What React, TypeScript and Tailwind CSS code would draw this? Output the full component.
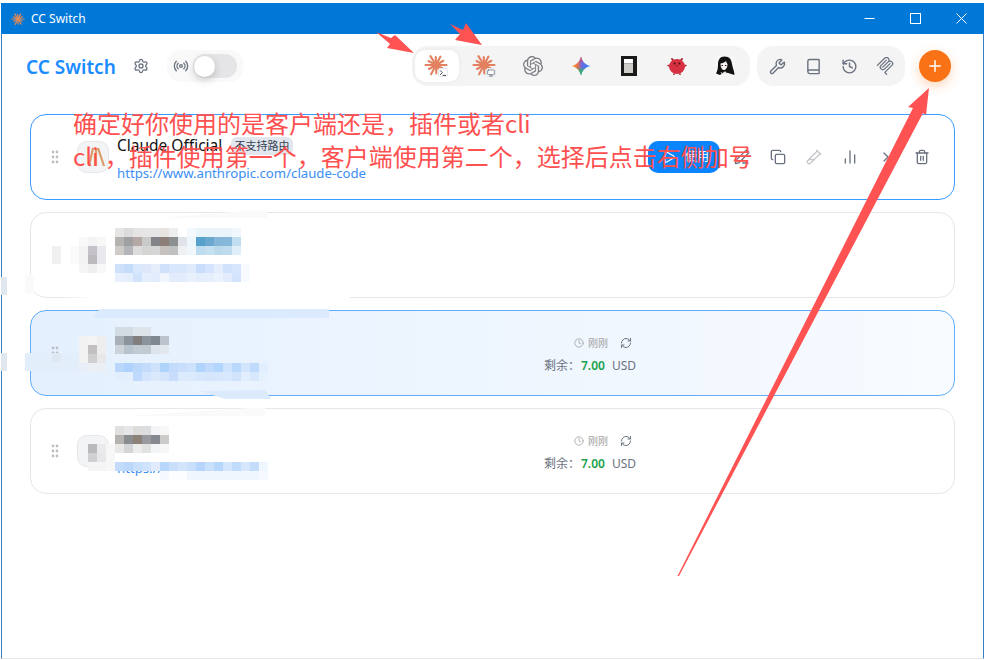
import { Settings, Radio, Wrench, Book, History, Plus, Play, Edit3, Copy, TestTube2, BarChart2, ChevronRight, Trash2, Clock, RefreshCw, Terminal, Monitor } from "lucide-react";
import { SiOpenai } from "react-icons/si";

const rays: [number, number][] = [[0, 10.5], [28, 8], [58, 10.5], [88, 8.5], [118, 10.5], [150, 8], [180, 10.5], [208, 8.5], [238, 10.5], [268, 8], [298, 9.5], [330, 8.5]];

function Star({ size = 24, color = "#e2805f" }: { size?: number; color?: string }) {
  return (
    <svg width={size} height={size} viewBox="-12 -12 24 24">
      {rays.map(([a, r], i) => {
        const t = (a * Math.PI) / 180;
        return <line key={i} x1={0} y1={0} x2={Math.cos(t) * r} y2={Math.sin(t) * r} stroke={color} strokeWidth={2.1} strokeLinecap="round" />;
      })}
      <circle r={3.6} fill={color} />
    </svg>
  );
}

function ClaudeTab({ active, badge }: { active?: boolean; badge: "terminal" | "monitor" }) {
  return (
    <button className={`relative w-[44px] h-[32px] flex items-center justify-center rounded-[10px] ${active ? "bg-white shadow-[0_0_4px_rgba(0,0,0,0.06)]" : ""}`}>
      <span className="mt-[-2px] ml-[-2px]"><Star /></span>
      <span className="absolute left-[23px] top-[18px] w-[10px] h-[9px] rounded-[2px] bg-white border border-[#e5e7eb] flex items-center justify-center">
        {badge === "terminal" ? <Terminal size={8} color="#111827" strokeWidth={2.4} /> : <Monitor size={8} color="#6b7280" strokeWidth={2.4} />}
      </span>
    </button>
  );
}

function Gemini() {
  const star = "M10 0.5C11.2 5.6 14.4 8.8 19.5 10C14.4 11.2 11.2 14.4 10 19.5C8.8 14.4 5.6 11.2 0.5 10C5.6 8.8 8.8 5.6 10 0.5Z";
  return (
    <svg width="20" height="20" viewBox="0 0 20 20">
      <defs>
        <linearGradient id="gemA" x1="0" y1="0" x2="1" y2="0">
          <stop offset="0" stopColor="#f0b030" />
          <stop offset="0.32" stopColor="#e8704a" />
          <stop offset="0.55" stopColor="#6a68e6" />
          <stop offset="1" stopColor="#2f8cf5" />
        </linearGradient>
        <linearGradient id="gemB" x1="0" y1="0" x2="0" y2="1">
          <stop offset="0.55" stopColor="#2fb56b" stopOpacity="0" />
          <stop offset="0.8" stopColor="#2fb56b" />
          <stop offset="1" stopColor="#1fae9a" />
        </linearGradient>
        <linearGradient id="gemC" x1="0" y1="0" x2="0" y2="1">
          <stop offset="0" stopColor="#e8404a" />
          <stop offset="0.35" stopColor="#e8404a" stopOpacity="0" />
        </linearGradient>
      </defs>
      <path d={star} fill="url(#gemA)" />
      <path d={star} fill="url(#gemB)" />
      <path d={star} fill="url(#gemC)" />
    </svg>
  );
}

function OpenCode() {
  return (
    <svg width="16" height="20" viewBox="0 0 16 20">
      <rect width="16" height="20" fill="#1c1a19" />
      <rect x="3" y="3" width="9" height="4.5" fill="#fff" />
      <rect x="3" y="7.5" width="9" height="9.5" fill="#cfcdca" />
    </svg>
  );
}

function RedBird() {
  return (
    <svg width="20" height="20" viewBox="0 0 20 20">
      <path d="M5 3 7 5.5M15 3 13 5.5" stroke="#a81c2a" strokeWidth="2" strokeLinecap="round" />
      <path d="M1 9.5 3 10M19 9.5 17 10" stroke="#c02432" strokeWidth="1.5" strokeLinecap="round" />
      <ellipse cx="10" cy="10.5" rx="8" ry="7.4" fill="#d63041" />
      <circle cx="7.6" cy="7.6" r="1" fill="#4a1014" />
      <circle cx="12.4" cy="7.6" r="1" fill="#4a1014" />
      <path d="M8.5 9.5h3l-1.5 1.4z" fill="#9a1a24" />
      <path d="M7 17.5v1.5M13 17.5v1.5" stroke="#9a1a24" strokeWidth="1.4" />
    </svg>
  );
}

function Girl() {
  return (
    <svg width="20" height="20" viewBox="0 0 20 20">
      <rect width="20" height="20" fill="#f7f7f7" />
      <path d="M9.5 0.5C5 0.5 3 4 3 8.5C3 12 2.5 15 1 17.5L5 19L9 16L13 17L19.5 19C19.5 15 17.5 12 17 8C16.5 3.5 14.5 0.5 9.5 0.5Z" fill="#111" />
      <path d="M5.5 7.5C7.5 7.5 9.5 6.5 11 5C11.5 6.5 12 7.5 12.5 8C12.5 11.5 11 14 9 14C7 14 5.5 11.5 5.5 7.5Z" fill="#f5f0ee" />
      <rect x="6.5" y="9" width="1.4" height="1" fill="#111" />
      <rect x="10" y="9" width="1.4" height="1" fill="#111" />
      <path d="M6 16 8 19 10 15.5 12 19 14 17" stroke="#e8e8e8" strokeWidth="0.8" fill="none" />
    </svg>
  );
}

function Mcp() {
  return (
    <svg width="18" height="18" viewBox="0 0 24 24" fill="#6b7280">
      <path d="M15.688 2.343a2.588 2.588 0 00-3.61 0l-9.626 9.44a.863.863 0 01-1.203 0 .823.823 0 010-1.18l9.626-9.44a4.313 4.313 0 016.016 0 4.116 4.116 0 011.204 3.54 4.3 4.3 0 013.609 1.18l.05.05a4.115 4.115 0 010 5.9l-8.706 8.537a.274.274 0 000 .393l1.788 1.754a.823.823 0 010 1.18.863.863 0 01-1.203 0l-1.788-1.753a1.92 1.92 0 010-2.754l8.706-8.538a2.47 2.47 0 000-3.54l-.05-.049a2.588 2.588 0 00-3.607-.003l-7.172 7.034-.002.002-.098.097a.863.863 0 01-1.204 0 .823.823 0 010-1.18l7.273-7.133a2.47 2.47 0 00-.003-3.537z" />
      <path d="M14.485 4.703a.823.823 0 000-1.18.863.863 0 00-1.204 0l-7.119 6.982a4.115 4.115 0 000 5.9 4.314 4.314 0 006.016 0l7.12-6.982a.823.823 0 000-1.18.863.863 0 00-1.204 0l-7.119 6.982a2.588 2.588 0 01-3.61 0 2.47 2.47 0 010-3.54l7.12-6.982z" />
    </svg>
  );
}

function Handle({ hidden }: { hidden?: boolean }) {
  return (
    <svg width="16" height="16" viewBox="0 0 16 16" fill="#bcbec2" className={`shrink-0 ${hidden ? "invisible" : ""}`}>
      {[3, 8, 13].map((y) => [6, 10].map((x) => <circle key={`${x}-${y}`} cx={x} cy={y} r="1.4" />))}
    </svg>
  );
}

function Mosaic({ x, y, w, rows, cell = 9 }: { x: number; y: number; w?: number; rows: string[][]; cell?: number }) {
  return (
    <div className="absolute" style={{ left: x, top: y, width: w }}>
      {rows.map((r, i) => (
        <div key={i} className="flex">
          {r.map((c, j) => (
            <div key={j} className="shrink-0" style={{ width: cell, height: cell, background: c === "-" ? "transparent" : `#${c}` }} />
          ))}
        </div>
      ))}
    </div>
  );
}

function Usage() {
  return (
    <div className="flex flex-col items-end gap-[7px] text-[12px] leading-[16px] text-[#6b7280]">
      <div className="flex items-center mr-[4px]">
        <Clock size={10} color="#a3a3a3" />
        <span className="ml-[4px] text-[10px] text-[#a3a3a3]">刚刚</span>
        <RefreshCw size={12} color="#6b7280" className="ml-[12px]" />
      </div>
      <div className="flex items-center">
        <span>剩余：</span>
        <span className="font-semibold text-[#16a34a] text-[12px] ml-[1px]">7.00</span>
        <span className="ml-[7px]">USD</span>
      </div>
    </div>
  );
}

function Card({ className, children, iconClass, noHandle, icon }: { className: string; children?: React.ReactNode; iconClass?: string; noHandle?: boolean; icon?: React.ReactNode }) {
  return (
    <div className={`h-[86px] rounded-[16px] border flex items-center pl-[16px] pr-[14px] ${className}`}>
      <Handle hidden={noHandle} />
      <div className={`ml-[14px] w-[32px] h-[32px] rounded-[10px] shrink-0 flex items-center justify-center ${iconClass ?? ""}`}>{icon}</div>
      {children}
    </div>
  );
}

export default function App() {
  const ic = "w-[36px] h-[36px] flex items-center justify-center";
  return (
    <div className="relative w-[988px] h-[660px] bg-white overflow-hidden pl-[1px] pt-[3px]" style={{ fontFamily: '"Noto Sans", "Noto Sans CJK SC", sans-serif' }}>
      <div className="w-[983px] h-[656px] flex flex-col border-l border-r border-b border-l-[#3a7fc4] border-r-[#3a7fc4] border-b-[#e5e7ef] bg-white">
        <div className="h-[31px] -mx-px bg-[#0078d7] flex items-center text-white shrink-0">
          <span className="ml-[10px]"><Star size={14} color="#e08a5a" /></span>
          <span className="ml-[6px] text-[12px]">CC Switch</span>
          <div className="ml-auto flex">
            <div className="w-[46px] h-[31px] flex items-center justify-center">
              <svg width="11" height="11" viewBox="0 0 11 11" stroke="#fff" strokeWidth="1"><line x1="0.5" y1="5.5" x2="10.5" y2="5.5" /></svg>
            </div>
            <div className="w-[46px] h-[31px] flex items-center justify-center">
              <svg width="11" height="11" viewBox="0 0 11 11" stroke="#fff" strokeWidth="1" fill="none"><rect x="0.5" y="0.5" width="10" height="10" /></svg>
            </div>
            <div className="w-[46px] h-[31px] flex items-center justify-center">
              <svg width="11" height="11" viewBox="0 0 11 11" stroke="#fff" strokeWidth="1"><path d="M0.5 0.5 10.5 10.5M10.5 0.5 0.5 10.5" /></svg>
            </div>
          </div>
        </div>

        <div className="h-[64px] flex items-center pl-[24px] pr-[32px] shrink-0">
          <span className="text-[19px] mt-[2px] font-semibold text-[#1a8cff] w-[92px] whitespace-nowrap">CC Switch</span>
          <Settings size={16} color="#6b7280" className="ml-[15px]" />
          <div className="ml-[18px] w-[76px] h-[32px] rounded-[14px] bg-[#f9f9f9] flex items-center pl-[6px]">
            <Radio size={16} color="#6b7280" />
            <div className="relative ml-[4px] w-[44px] h-[24px] rounded-full bg-[#e5e5e7]">
              <div className="absolute left-[1px] top-[1.5px] w-[21px] h-[21px] rounded-full bg-white shadow-[0_3px_8px_rgba(0,0,0,0.2)]" />
            </div>
          </div>
          <div className="ml-auto h-[40px] w-[338px] rounded-[16px] bg-[#f4f4f5] flex items-center px-[3px] gap-[4px]">
            <ClaudeTab active badge="terminal" />
            <ClaudeTab badge="monitor" />
            <div className="w-[44px] h-[32px] flex items-center justify-center"><SiOpenai size={20} color="#7b7c82" /></div>
            <div className="w-[44px] h-[32px] flex items-center justify-center"><Gemini /></div>
            <div className="w-[44px] h-[32px] flex items-center justify-center"><OpenCode /></div>
            <div className="w-[44px] h-[32px] flex items-center justify-center"><RedBird /></div>
            <div className="w-[44px] h-[32px] flex items-center justify-center"><Girl /></div>
          </div>
          <div className="ml-[7px] h-[40px] w-[148px] rounded-[16px] bg-[#f4f4f5] flex items-center px-[2px]">
            <div className={ic}><Wrench size={17} color="#6b7280" /></div>
            <div className={ic}><Book size={17} color="#6b7280" /></div>
            <div className={ic}><History size={17} color="#6b7280" /></div>
            <div className={ic}><Mcp /></div>
          </div>
          <div className="ml-[14px] w-[32px] h-[32px] rounded-full bg-[#f97316] flex items-center justify-center shadow-[0_4px_12px_rgba(249,115,22,0.3)]">
            <Plus size={18} color="#fff" />
          </div>
        </div>

        <div className="px-[28px] pt-[16px] flex flex-col gap-[12px]">
          <Card
            className="border-[#3b9bff] bg-white"
            iconClass="bg-[#f3f4f6] border border-[#e5e7eb]"
            icon={
              <svg width="22" height="22" viewBox="0 0 22 22" stroke="#d99a6c" strokeWidth="2.2" className="ml-[6px]">
                <path d="M8 2 4 20M11 2V20M13 2 19 20" />
              </svg>
            }
          >
            <div className="ml-[8px] flex flex-col gap-[7px] mt-[4px]">
              <div className="flex items-center gap-[8px] h-[20px]">
                <span className="text-[15.5px] w-[106px] text-[#111] whitespace-nowrap">Claude Official</span>
                <span className="h-[18px] w-[62px] rounded-[6px] bg-[#e2e7ef] text-[11px] leading-[18px] text-center text-[#374151] whitespace-nowrap">不支持路由</span>
              </div>
              <span className="text-[13.2px] leading-[20px] text-[#3b8ef5] whitespace-nowrap">https://www.anthropic.com/claude-code</span>
            </div>
            <div className="ml-auto flex items-center">
              <div className="w-[72px] h-[32px] rounded-[10px] bg-[#0a84ff] flex items-center justify-center gap-[9px] pl-[3px] text-white text-[12px]">
                <Play size={14} color="#fff" />
                <span>使用</span>
              </div>
              <div className={`${ic} ml-[4px]`}><Edit3 size={16} color="#6b7280" /></div>
              <div className={ic}><Copy size={16} color="#6b7280" /></div>
              <div className={ic}><TestTube2 size={16} color="#c4c6ca" /></div>
              <div className={ic}><BarChart2 size={16} color="#6b7280" /></div>
              <div className={ic}><ChevronRight size={16} color="#6b7280" /></div>
              <div className={ic}><Trash2 size={16} color="#6b7280" /></div>
            </div>
          </Card>
          <Card className="border-[#e5e7eb] bg-white" noHandle />
          <Card className="border-[#60aefb] bg-gradient-to-r from-[#e4f0fe] to-[#f8fbff]">
            <div className="ml-auto mr-[304px] mt-[3px]"><Usage /></div>
          </Card>
          <Card className="border-[#e5e7eb] bg-white" iconClass="bg-[#f3f4f6] border border-[#e5e7eb]">
            <div className="absolute left-[117px] top-[458px] text-[13.2px] leading-[20px] text-[#3b8ef5]">https://</div>
            <div className="ml-auto mr-[304px] mt-[3px]"><Usage /></div>
          </Card>
        </div>
      </div>

      {/* pixelated redaction patches */}
      <svg className="absolute left-0 top-0 pointer-events-none" width="988" height="660">
        <polygon points="157,218 258,210 267,212 267,218" fill="#fafafa" />
        <polygon points="60,298 330,290 350,292 350,299 60,299" fill="#ffffff" />
        <polygon points="92,318 100,309 329,309 329,318" fill="#dbeafc" />
        <polygon points="200,391 265,390 271,399 225,399" fill="#dbeafc" />
        <polygon points="130,416 250,408 265,408 265,416" fill="#fafafa" />
      </svg>
      <Mosaic x={1} y={277} rows={[["dfe6ee"], ["dfe6ee"], ["dfe6ee"]]} cell={6} w={6} />
      <Mosaic x={1} y={353} rows={[["dfe6ee"], ["dfe6ee"], ["dfe6ee"]]} cell={6} w={6} />
      <Mosaic x={25} y={275} rows={[["fafafa"], ["fafafa"]]} cell={9} />
      <Mosaic x={52} y={246} rows={[["f0f0f0"], ["f0f0f0"]]} />
      <Mosaic x={70} y={246} rows={[["fafafa"], ["fafafa"]]} />
      <Mosaic x={25} y={353} rows={[["e3eefb", "e3eefb", "e3eefb", "dde8f3", "e3eefb", "e3eefb"], ["e3eefb", "e3eefb", "e3eefb", "e3eefb", "e3eefb", "e3eefb"]]} />
      <Mosaic x={79} y={237} rows={[["f8f8f8", "f3f3f3", "f8f8f8"], ["f3f3f3", "c4c2c8", "e8e8ed"], ["f3f3f3", "bcb9bc", "e8e8ed"], ["f5f5f5", "efefef", "f8f8f8"]]} />
      <Mosaic x={115} y={228} rows={[
        "e6e5e4 dcdcdc e5e4e3 e6e6e5 e6e6e6 e6e3e0 eeeeee ffffff f3f9fc eaf5fb eaf5fb eaf5fb eaf5fb f0f8fd".split(" "),
        "b5b3b1 a0a0a3 b3a8a3 c8caca 838488 8b7e78 8b8f90 e0e4ea edf6fb 56a2cd 6aa8cf 85b6d8 85b8da c0def0".split(" "),
        "cfccc8 b3b5b9 dcdcdc d4d4d2 d6d6d6 c7c2bd bfc0c0 eef0f2 f0f7fb bddcef c5e0f0 bad9eb bedced dfeff9".split(" "),
      ]} />
      <Mosaic x={115} y={264} rows={[
        "cfe0fb c6dcfb d9e8fc dde9fb e6eefc cfe0fb d9e6fb d9e7fc dfebfd c9dcfb d5e4fc e4eefd d0e2fc d7e6fd f7faff".split(" "),
        "e8f0fd e4eefc d0e3fb e4eefd e2ecfc f1f6fe e2ecfd e2ecfd e8f0fd e4edfc e5eefd eaf2fe e2ecfd d3e3fc f7fbff".split(" "),
      ]} />
      <Mosaic x={79} y={336} rows={[["f2f2f2", "f4f4f4", "eeeeee"], ["f2f2f2", "c2c0c0", "eeeeee"], ["f2f2f2", "cfcfcf", "e8e8e8"], ["e8eef6", "ecf0f6", "eaeff6"]]} />
      <Mosaic x={115} y={327} rows={[
        "d3dce3 d3dce3 dde4ea dde4ea - -".split(" "),
        "a9b0b7 8b939c 807f7e 8b939c 7f8791 bcc3cc".split(" "),
        "ccd3d9 b8c4cd c3cbd2 c1cad1 dde4ec e2e8ee".split(" "),
      ]} />
      <Mosaic x={115} y={363} rows={[
        "b9d7fb aed2fb bbd8fb c3dcfb cfe2fb afd4fc c4dcfb c8defb cde2fb b0d4fc bfdafc b2d5fd cfe3fc bad8fc d2e5fc bfdafb e0eefd".split(" "),
        "e2eefd e3effd bfdafc d3e5fc dbe9fc d5e5fb c8ddfb dbeafd dbeafd d8e8fc d5e6fc d5e6fd d8e8fd d2e4fc e2eefd d7e7fc e6f1fe".split(" "),
      ]} />
      <Mosaic x={88} y={444} rows={[["bab9be", "eaeaee", "f7f7f7"], ["d0cfd2", "e8e8ea", "f7f7f7"], ["f5f5f5", "f5f5f5", "f7f7f7"]]} />
      <Mosaic x={115} y={426} rows={[
        "e0e0e0 e6e6e8 dedcda dcdddf f4f4f6 f7f7f7".split(" "),
        "b6b2b0 8b8c90 8c8278 979b9f 858890 cdcbc9".split(" "),
        "e8e8e6 d4d5d7 ececea e0e1e1 f4f5f7 f7f7f7".split(" "),
      ]} />
      <Mosaic x={115} y={462} rows={[
        "c4dcfb bbd7fb c9e0fc d0e3fc e0ecfd b9d7fc c9dffc d3e5fd c9e0fc b5d5fd c9e0fc b8d7fd d3e6fd c1dbfc d5e6fd c4dcfc eef6ff".split(" "),
        "- - - - - f5f9ff fbfdff fbfdff f0f6fe f0f6fe f0f6fe f0f6fe f0f6fe f0f6fe f0f6fe f0f6fe f5f9ff".split(" "),
      ]} />

      {/* red annotations */}
      <svg className="absolute left-0 top-0 pointer-events-none" width="988" height="660">
        <polygon points="677.5,576 913,108 908,107 929,88 926,115 923,113 679,576" fill="#ff5252" />
        <polygon points="376,32 391,38 395,35 414,53 387,48 390,44" fill="#ff5252" />
        <polygon points="450,24 463,30 466,23 482,45 455,40 460,34" fill="#ff5252" />
      </svg>
      <div className="absolute left-[73px] top-[106px] text-[24px] leading-[33px] text-[#ff5050] whitespace-nowrap pointer-events-none" style={{ fontFamily: '"Noto Sans CJK SC", sans-serif' }}>
        <div>确定好你使用的是客户端还是，插件或者cli</div>
        <div><span className="mr-[6px]">cli</span>，插件使用第一个，客户端使用第二个，选择后点击右侧加号</div>
      </div>
    </div>
  );
}
